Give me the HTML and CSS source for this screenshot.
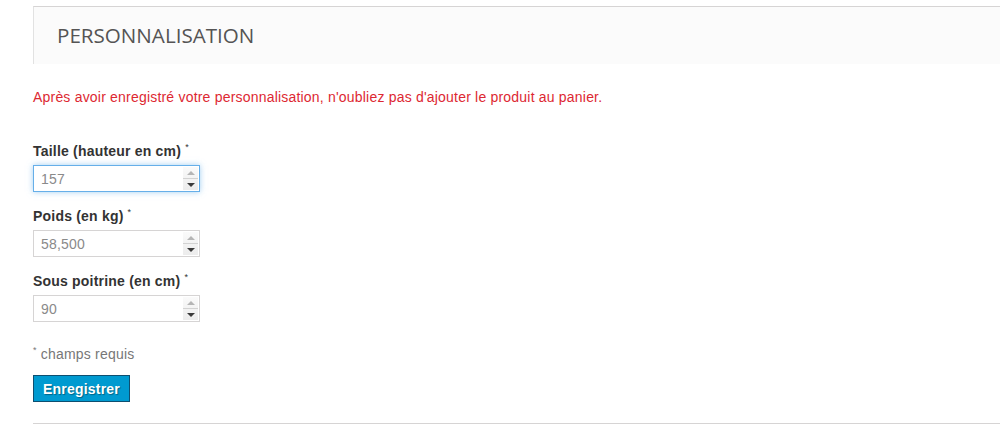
FILE: index.html
```html
<!DOCTYPE html>
<html lang="fr">
<head>
    <meta charset="UTF-8">
    <meta name="viewport" content="width=device-width, initial-scale=1.0">
    <title>Personnalisation</title>
    <link rel="stylesheet" href="styles.css">
</head>
<body>
    <div class="page">
        <section class="panel">
            <h3 class="panel-heading">Personnalisation</h3>
        </section>

        <p class="notice">Après avoir enregistré votre personnalisation, n'oubliez pas d'ajouter le produit au panier.</p>

        <form class="custom-form">
            <div class="form-group">
                <label for="taille">Taille (hauteur en cm) <sup>*</sup></label>
                <div class="spin-field">
                    <input type="text" id="taille" class="field-input is-focus" value="157">
                    <span class="spinner"><span class="spin-up"></span><span class="spin-down"></span></span>
                </div>
            </div>

            <div class="form-group">
                <label for="poids">Poids (en kg) <sup>*</sup></label>
                <div class="spin-field">
                    <input type="text" id="poids" class="field-input" value="58,500">
                    <span class="spinner"><span class="spin-up"></span><span class="spin-down"></span></span>
                </div>
            </div>

            <div class="form-group">
                <label for="poitrine">Sous poitrine (en cm) <sup>*</sup></label>
                <div class="spin-field">
                    <input type="text" id="poitrine" class="field-input" value="90">
                    <span class="spinner"><span class="spin-up"></span><span class="spin-down"></span></span>
                </div>
            </div>

            <p class="required-note"><sup>*</sup> champs requis</p>

            <button type="button" class="save-button">Enregistrer</button>
        </form>

        <hr class="divider">
    </div>
</body>
</html>
```

FILE: styles.css
```css
* {
    box-sizing: border-box;
    margin: 0;
    padding: 0;
}

body {
    font-family: Arial, "Liberation Sans", sans-serif;
    font-size: 14px;
    letter-spacing: 0.2px;
    color: #333;
    background: #ffffff;
    overflow: hidden;
}

.page {
    padding: 6px 0 0 33px;
}

.panel {
    background: #fbfbfb;
    border-top: 1px solid #d6d4d4;
    border-left: 1px solid #e2e2e2;
    height: 58px;
    padding: 0 0 0 23px;
}

.panel-heading {
    font-family: "Open Sans", sans-serif;
    font-weight: 400;
    font-size: 20.6px;
    letter-spacing: 0;
    line-height: 56px;
    text-transform: uppercase;
    color: #555454;
}

.notice {
    color: #dd2832;
    line-height: 18px;
    margin: 24px 0 0;
}

.custom-form {
    margin-top: 36px;
}

.form-group {
    margin-bottom: 15px;
}

.form-group label {
    display: block;
    font-weight: bold;
    color: #333;
    line-height: 18px;
    margin-bottom: 5px;
}

sup {
    font-size: 9px;
    line-height: 0;
    font-weight: normal;
    vertical-align: 6px;
    color: #333;
}

.spin-field {
    position: relative;
    width: 167px;
    height: 27px;
}

.field-input {
    width: 100%;
    height: 100%;
    border: 1px solid #d6d4d4;
    background: #fff;
    color: #8a8a8a;
    font-family: inherit;
    font-size: 14px;
    letter-spacing: 0.2px;
    padding: 0 22px 0 7px;
    outline: none;
}

.field-input.is-focus {
    border-color: #66afe9;
    box-shadow: 0 0 6px rgba(102, 175, 233, 0.6);
}

.spinner {
    position: absolute;
    top: 2px;
    right: 2px;
    bottom: 2px;
    width: 15px;
    display: flex;
    flex-direction: column;
    background: linear-gradient(#fafafa, #ececec);
}

.spin-up,
.spin-down {
    flex: 1;
    display: flex;
    align-items: center;
    justify-content: center;
}

.spin-up {
    border-bottom: 1px solid #d2d2d2;
}

.spin-up::before {
    content: "";
    border-left: 4px solid transparent;
    border-right: 4px solid transparent;
    border-bottom: 4px solid #b5b5b5;
}

.spin-down::before {
    content: "";
    border-left: 4px solid transparent;
    border-right: 4px solid transparent;
    border-top: 4px solid #3a3a3a;
}

.required-note {
    color: #777;
    line-height: 18px;
    margin-top: 23px;
}

.required-note sup {
    color: #777;
}

.save-button {
    margin-top: 12px;
    width: 97px;
    height: 27px;
    background: #009ad0;
    border: 1px solid #0e4f70;
    color: #fff;
    font-family: inherit;
    font-weight: bold;
    font-size: 14px;
    letter-spacing: 0.2px;
    text-shadow: 1px 1px 1px rgba(0, 0, 0, 0.35);
    cursor: pointer;
}

.divider {
    border: none;
    border-top: 1px solid #d6d4d4;
    margin-top: 21px;
}
```
